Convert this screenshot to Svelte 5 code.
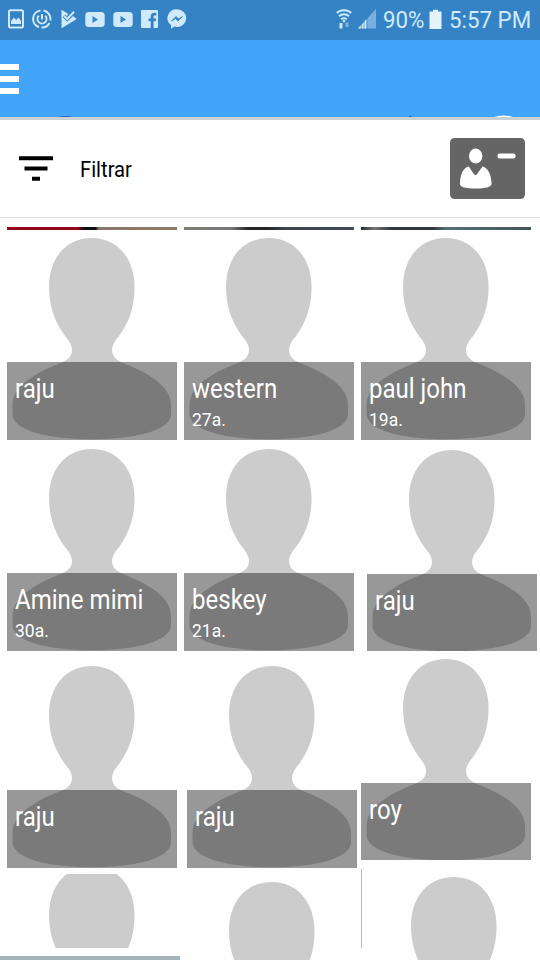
<script>
  // gap = space above the card, indent = how far it is pushed from the column edge
  const columns = [
    {
      strip: 'red',
      people: [
        { name: 'raju', age: '', gap: 7.5, indent: 0 },
        { name: 'Amine mimi', age: '30a.', gap: 8.5, indent: 0 },
        { name: 'raju', age: '', gap: 14.5, indent: 0 },
      ],
    },
    {
      strip: 'dark',
      people: [
        { name: 'western', age: '27a.', gap: 7.5, indent: 0 },
        { name: 'beskey', age: '21a.', gap: 8.5, indent: 0 },
        { name: 'raju', age: '', gap: 14.5, indent: 3 },
        { loading: true, gap: 13, indent: 3 },
      ],
    },
    {
      strip: 'teal',
      people: [
        { name: 'paul john', age: '19a.', gap: 7.5, indent: 0 },
        { name: 'raju', age: '', gap: 9.4, indent: 6 },
        { name: 'roy', age: '', gap: 6.5, indent: 0 },
        { loading: true, gap: 15.6, indent: 8 },
      ],
    },
  ];
</script>

{#snippet avatar()}
  <svg class="avatar" viewBox="0 0 169.5 202.5">
    <path
      fill="#ccc"
      d="M84.8 1C59 1 42 21 42 50C42 68 47 84 58 99C62 104 65 108 65 113C65 118 62 123 54 125.700C36 133 5.500 146 5.500 168V177C5.500 193 40 202.300 84.800 202.300S164 193 164 177V168C164 146 133.500 133 115.500 125.700C108 123 105 118 105 113C105 108 108 104 112 99C123 84 127.500 68 127.500 50C127.500 21 110 1 84.800 1Z"
    />
  </svg>
{/snippet}

<div class="screen">
  <div class="status">
    <div class="notifications">
      <svg width="16" height="20" viewBox="0 0 16 20">
        <rect x="1" y="1.200" width="14" height="17.400" rx="1.500" fill="none" stroke="#cfeafc" stroke-width="2" />
        <path d="M3 15V12L6 8.500L8 11L10.500 8.500L13 12V15Z" fill="#cfeafc" />
      </svg>
      <svg width="20" height="20" viewBox="0 0 20 20" fill="none" stroke="#cfeafc">
        <path d="M8.500 1.500A8.500 8.500 0 0 0 7 18M9.500 18.500A8.500 8.500 0 0 0 17.500 14M18.300 11.500A8.500 8.500 0 0 0 11.500 1.600" stroke-width="2" />
        <path d="M6.800 6.800A4.500 4.500 0 1 0 13.200 6.800M10 5V10.500" stroke-width="2" />
      </svg>
      <svg width="16" height="20" viewBox="0 0 16 20">
        <path d="M.5 .8L7 4.800L6 8L3.500 6L1.800 8L6.200 12.500L12 7L15.800 10L.5 19.200Z" fill="#cfeafc" />
        <path d="M3 6.800L6.200 10L13 2.800" fill="none" stroke="#3583c5" stroke-width="3.400" />
        <path d="M3 6.800L6.200 10L13 2.800" fill="none" stroke="#cfeafc" stroke-width="2" />
      </svg>
      {#each [1, 2] as n (n)}
        <svg width="20" height="20" viewBox="0 0 20 20">
          <rect x=".3" y="3" width="19.400" height="15" rx="3.500" fill="#cfeafc" />
          <path d="M7.500 7L13 10.500L7.500 14Z" fill="#3583c5" />
        </svg>
      {/each}
      <svg width="17" height="20" viewBox="0 0 17 20">
        <rect y="1" width="17" height="18" rx="1" fill="#cfeafc" />
        <path d="M9.700 19V12.300H7.500V9.500H9.700V7.500C9.700 5 11.100 3.800 13.200 3.800H15.300V6.500H13.800C12.800 6.500 12.600 7 12.600 7.900V9.500H15.300L14.900 12.300H12.600V19Z" fill="#3583c5" />
      </svg>
      <svg width="20" height="20" viewBox="0 0 20 20">
        <path d="M10 .3A9.300 8.800 0 0 0 4 16V19.800L7.500 17.600A9.300 8.800 0 1 0 10 .3Z" fill="#cfeafc" />
        <path d="M4.500 12L9 7.500L11.500 10L15.500 7.500L11 12L8.500 9.600Z" fill="#3583c5" stroke="#3583c5" stroke-width=".8" />
      </svg>
    </div>
    <div class="system">
      <svg class="wifi" width="16" height="20" viewBox="0 0 16 20" fill="none" stroke="#cfeafc">
        <path d="M.8 4C4.500 .4 11.500 .4 15.200 4M3 7.200C5.800 4.600 10.200 4.600 13 7.200M5.200 10.300C7 8.800 9 8.800 10.800 10.300" stroke-width="1.900" />
        <circle cx="8" cy="12" r="1" fill="#cfeafc" />
        <path d="M5 14V19.500" stroke-width="3" />
        <path d="M11 13.500V18" stroke-width="3" opacity=".45" />
      </svg>
      <svg class="signal" width="18" height="20" viewBox="0 0 18 20">
        <path d="M0 19.500L18 0V19.500Z" fill="#79b0df" />
        <path d="M0 19.500L8.500 10.300V19.500Z" fill="#cfeafc" />
        <path d="M3.300 14V20M6 12V20M9 8V20" stroke="#3583c5" stroke-width=".7" />
      </svg>
      <span class="percent"><b>90%</b></span>
      <svg class="battery" width="13" height="20" viewBox="0 0 13 20">
        <path d="M4 .8H9V2.500H12.500V20H.5V2.500H4Z" fill="#e4f2fb" />
      </svg>
      <span class="clock"><b>5:57 PM</b></span>
    </div>
  </div>

  <div class="header">
    <div class="menu"><i></i><i></i><i></i></div>
    <svg class="edge" width="540" height="2" viewBox="0 0 540 2">
      <path d="M58 2Q66 0 73 2Z" fill="#2761c0" />
      <path d="M409 2L410.500 .5L412 2Z" fill="#285b88" />
      <path d="M494 2Q503 -1 513 2Z" fill="#fff" />
    </svg>
  </div>

  <div class="toolbar">
    <svg width="34" height="26" viewBox="0 0 34 26">
      <path d="M0 2.200H34M5.500 12.500H28.500M13 22.700H21" stroke="#000" stroke-width="4" />
    </svg>
    <span class="filter">Filtrar</span>
    <svg class="contact" width="75" height="61" viewBox="0 0 75 61">
      <path d="M5 0H70Q75 0 75 5V56Q75 61 70 61H5Q0 61 0 56V5Q0 0 5 0Z" fill="#656565" />
      <ellipse cx="25.700" cy="18" rx="6.700" ry="7.500" fill="#fff" />
      <path d="M18.800 28.500L23.500 35.500Q25.500 38.500 27.500 35.500L32.500 28.500C38.500 30 41.500 38 41.500 46Q41 50.500 25.500 50.500T10 46C10 38 12.500 30 18.800 28.500Z" fill="#fff" />
      <rect x="47.500" y="15.500" width="18" height="5" rx="2" fill="#fff" />
    </svg>
  </div>

  <div class="people">
    {#each columns as column, i}
      <div class="column">
        <div class="strip {column.strip}"></div>
        {#each column.people as person}
          <div class="card" style="margin-top: {person.gap}px; margin-left: {person.indent}px">
            {@render avatar()}
            {#if !person.loading}
              <div class="caption">
                <div class="name">{person.name}</div>
                <div class="age">{person.age}</div>
              </div>
            {/if}
          </div>
        {/each}
        {#if i === 0}
          <div class="cropped">{@render avatar()}</div>
          <div class="next"></div>
        {/if}
      </div>
    {/each}
    <div class="seam"></div>
  </div>
</div>

<style>
  :global(body) {
    margin: 0;
    background: #fff;
  }

  .screen {
    width: 540px;
    height: 960px;
    overflow: hidden;
    display: flex;
    flex-direction: column;
    background: #fefefe;
    font-family: Roboto, "Liberation Sans", sans-serif;
  }

  svg {
    display: block;
    flex: none;
  }

  .status {
    display: flex;
    justify-content: space-between;
    box-sizing: border-box;
    height: 40px;
    flex: none;
    padding: 9px 8px 0;
    background: #3583c5;
    color: #cfeafc;
  }

  .notifications {
    display: flex;
    gap: 8.3px;
  }

  .system {
    display: flex;
  }

  .wifi {
    margin-right: 6px;
  }

  .signal {
    margin-right: 7px;
  }

  .percent,
  .clock {
    font-size: 24px;
    line-height: 22px;
    white-space: nowrap;
  }

  .percent {
    width: 46px;
  }

  .clock {
    width: 83px;
    margin-left: 7px;
  }

  .percent b,
  .clock b {
    display: inline-block;
    font-weight: 400;
    transform: scaleX(0.93);
    transform-origin: left;
  }

  .header {
    display: flex;
    flex-direction: column;
    justify-content: space-between;
    box-sizing: border-box;
    height: 80px;
    flex: none;
    padding-top: 24px;
    background: #42a5f7;
    border-bottom: 3px solid #cbd0d5;
  }

  .menu {
    display: flex;
    flex-direction: column;
    gap: 6px;
  }

  .menu i {
    width: 19px;
    height: 6px;
    background: #fff;
  }

  .toolbar {
    display: flex;
    align-items: center;
    box-sizing: border-box;
    height: 98px;
    flex: none;
    padding: 0 15px 0 19px;
    background: #fff;
    border-bottom: 1px solid #ddd;
  }

  .filter {
    margin-left: 26.5px;
    font-size: 22px;
    color: #000;
    transform: scaleX(0.92);
    transform-origin: left;
    padding-top: 1px;
  }

  .contact {
    margin-left: auto;
  }

  .people {
    display: flex;
    gap: 7.4px;
    padding: 9px 0 0 7.4px;
    position: relative;
  }

  .column {
    width: 169.6px;
    flex: none;
  }

  .strip {
    height: 2.5px;
  }

  .red {
    background: linear-gradient(90deg, #930716 0 42%, #111 45% 52%, #88776b 54%, #927969);
  }

  .dark {
    background: linear-gradient(90deg, #7e7e77, #777 28%, #272527 38% 48%, #3b444f 60%, #404b58);
  }

  .teal {
    background: linear-gradient(90deg, #252c34, #777 8%, #303940 18%, #30383f 42%, #587078 50%, #45545c);
  }

  .card {
    display: grid;
    width: 169.6px;
    height: 202.5px;
  }

  .card > :global(*) {
    grid-area: 1 / 1;
  }

  .avatar {
    width: 169.6px;
    height: 202.5px;
  }

  .caption {
    align-self: end;
    box-sizing: border-box;
    height: 77.5px;
    padding: 12.2px 0 0 7.6px;
    background: rgba(0, 0, 0, 0.4);
    color: #fff;
    white-space: nowrap;
  }

  .name {
    font-size: 27px;
    line-height: 30px;
    transform: scaleX(0.89);
    transform-origin: left;
  }

  .age {
    margin-top: 5.6px;
    font-size: 19px;
    line-height: 20px;
    transform: scaleX(0.92);
    transform-origin: left;
  }

  .cropped {
    display: flex;
    height: 73.5px;
    margin-top: 6.5px;
    overflow: hidden;
  }

  .cropped .avatar {
    margin-top: -9px;
  }

  .next {
    width: 180px;
    height: 4px;
    margin: 8.5px 0 0 -7.5px;
    background: #a5b4bb;
  }

  /* sliver left at the edge of the last card */
  .seam {
    position: absolute;
    left: 361px;
    top: 651px;
    width: 1px;
    height: 79px;
    background: #b9b9b9;
  }
</style>
